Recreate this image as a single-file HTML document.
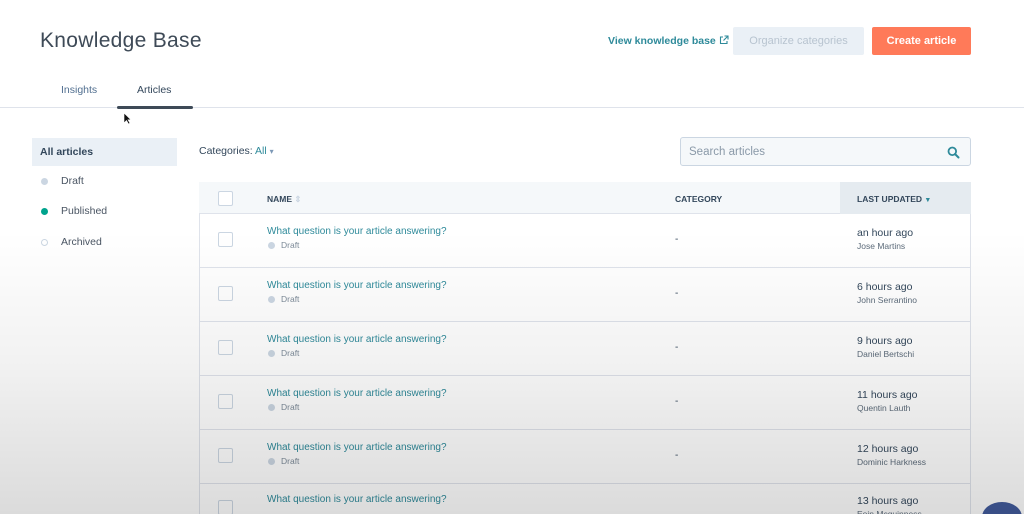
<!DOCTYPE html>
<html style="width:1024px;height:514px;overflow:hidden"><head><style>
*{margin:0;padding:0;box-sizing:border-box}
body{width:1024px;height:514px;overflow:hidden;background:#fff;font-family:"Liberation Sans",sans-serif;color:#33475b;position:relative}
.abs{position:absolute}
.title{left:40px;top:29px;font-size:21px;color:#3e4a57;font-weight:300;letter-spacing:.3px}
.link{left:608px;top:35px;font-size:10.5px;color:#2e8a9a;font-weight:bold}
.btn1{left:733px;top:27px;width:131px;height:28px;background:#eaf0f6;color:#b8c4d0;font-size:11px;text-align:center;line-height:28px;border-radius:2px}
.btn2{left:872px;top:27px;width:99px;height:28px;background:#ff7a59;color:#fff;font-size:11px;font-weight:bold;text-align:center;line-height:28px;border-radius:2px}
.tab{top:84px;font-size:10.5px}
.hr{left:0;top:107px;width:1024px;height:1px;background:#dfe3eb}
.ul{left:117px;top:106px;width:76px;height:3px;background:#3e4a57;border-radius:2px}
.side{left:32px;top:138px;width:145px;height:28px;background:#eaf0f6;font-size:10.5px;font-weight:bold;line-height:28px;padding-left:8px}
.si{left:61px;font-size:10.5px;color:#4a5563}
.dot{left:41px;width:7px;height:7px;border-radius:50%}
.cat{left:199px;top:145px;font-size:10.5px}
.search{left:680px;top:137px;width:291px;height:29px;border:1px solid #cbd6e2;background:#f5f8fa;border-radius:3px;font-size:11.5px;color:#8a99a8;line-height:29px;padding-left:8px}
.table{left:199px;top:182px;width:772px;height:340px;border:1px solid #dfe3eb;border-bottom:none}
.th{left:199px;top:182px;width:772px;height:32px;background:#f5f8fa;border-bottom:1px solid #dfe3eb}
.hcell{font-size:8.5px;font-weight:bold;top:194px;color:#33475b}
.cb{left:218px;width:15px;height:15px;border:1px solid #cbd6e2;border-radius:2px;background:#fff}
.q{left:267px;font-size:10px;color:#2e8a9a}
.dr{left:281px;font-size:8.5px;color:#7c8a98}
.dd{left:268px;width:7px;height:7px;border-radius:50%;background:#cbd6e2}
.t{left:857px;font-size:10.5px;color:#33475b}
.n{left:857px;font-size:8.5px;color:#5c6b7a}
.rl{left:199px;width:772px;height:1px;background:#dfe3eb}
.shade{left:0;top:0;width:1024px;height:514px;background:linear-gradient(to bottom,rgba(0,0,0,0) 0%,rgba(0,0,0,0) 45%,rgba(0,0,0,.05) 70%,rgba(0,0,0,.14) 100%);pointer-events:none}
</style></head><body>
<div class="abs title">Knowledge Base</div>
<div class="abs link">View knowledge base <svg width="10" height="10" viewBox="0 0 10 10" style="vertical-align:-1px"><path d="M4 2H1.5v6.5H8V6M5.5 1H9v3.5M9 1L4.5 5.5" fill="none" stroke="#2e8a9a" stroke-width="1.1"/></svg></div>
<div class="abs btn1">Organize categories</div>
<div class="abs btn2">Create article</div>
<div class="abs tab" style="left:61px;color:#516f90">Insights</div>
<div class="abs tab" style="left:137px;color:#33475b">Articles</div>
<div class="abs hr"></div>
<div class="abs ul"></div>
<svg class="abs" style="left:123px;top:112px" width="9" height="13" viewBox="0 0 9 13"><path d="M1 1v10l2.5-2.5 2 3.5 1.5-.8-2-3.4H8z" fill="#111" stroke="#fff" stroke-width=".6"/></svg>
<div class="abs side">All articles</div>
<div class="abs dot" style="top:178px;background:#cbd6e2"></div><div class="abs si" style="top:175px">Draft</div>
<div class="abs dot" style="top:208px;background:#00a38d"></div><div class="abs si" style="top:205px">Published</div>
<div class="abs dot" style="top:239px;border:1px solid #cbd6e2"></div><div class="abs si" style="top:236px">Archived</div>
<div class="abs cat">Categories: <span style="color:#2e8a9a">All</span> <span style="color:#7c98b6;font-size:8px">▾</span></div>
<div class="abs search">Search articles</div>
<svg class="abs" style="left:947px;top:146px" width="13" height="13" viewBox="0 0 13 13"><circle cx="5.3" cy="5.3" r="3.8" fill="none" stroke="#2e8a9a" stroke-width="1.8"/><path d="M8 8l3.5 3.5" stroke="#2e8a9a" stroke-width="2" stroke-linecap="round"/></svg>
<div class="abs table"></div>
<div class="abs th"></div>
<div class="abs" style="left:840px;top:182px;width:131px;height:32px;background:#e5ebf0"></div>
<div class="abs cb" style="top:191px"></div>
<div class="abs hcell" style="left:267px">NAME <span style="color:#cbd6e2">⇕</span></div>
<div class="abs hcell" style="left:675px">CATEGORY</div>
<div class="abs hcell" style="left:857px">LAST UPDATED <span style="color:#2e8a9a;font-size:7px">▼</span></div>

<div class="abs cb" style="top:232px"></div><div class="abs q" style="top:226px">What question is your article answering?</div><div class="abs dd" style="top:242px"></div><div class="abs dr" style="top:240px">Draft</div><div class="abs" style="left:675px;top:234px;font-size:10px">-</div><div class="abs t" style="top:227px">an hour ago</div><div class="abs n" style="top:241px">Jose Martins</div>
<div class="abs rl" style="top:267px"></div>
<div class="abs cb" style="top:286px"></div><div class="abs q" style="top:280px">What question is your article answering?</div><div class="abs dd" style="top:296px"></div><div class="abs dr" style="top:294px">Draft</div><div class="abs" style="left:675px;top:288px;font-size:10px">-</div><div class="abs t" style="top:281px">6 hours ago</div><div class="abs n" style="top:295px">John Serrantino</div>
<div class="abs rl" style="top:321px"></div>
<div class="abs cb" style="top:340px"></div><div class="abs q" style="top:334px">What question is your article answering?</div><div class="abs dd" style="top:350px"></div><div class="abs dr" style="top:348px">Draft</div><div class="abs" style="left:675px;top:342px;font-size:10px">-</div><div class="abs t" style="top:335px">9 hours ago</div><div class="abs n" style="top:349px">Daniel Bertschi</div>
<div class="abs rl" style="top:375px"></div>
<div class="abs cb" style="top:394px"></div><div class="abs q" style="top:388px">What question is your article answering?</div><div class="abs dd" style="top:404px"></div><div class="abs dr" style="top:402px">Draft</div><div class="abs" style="left:675px;top:396px;font-size:10px">-</div><div class="abs t" style="top:389px">11 hours ago</div><div class="abs n" style="top:403px">Quentin Lauth</div>
<div class="abs rl" style="top:429px"></div>
<div class="abs cb" style="top:448px"></div><div class="abs q" style="top:442px">What question is your article answering?</div><div class="abs dd" style="top:458px"></div><div class="abs dr" style="top:456px">Draft</div><div class="abs" style="left:675px;top:450px;font-size:10px">-</div><div class="abs t" style="top:443px">12 hours ago</div><div class="abs n" style="top:457px">Dominic Harkness</div>
<div class="abs rl" style="top:483px"></div>
<div class="abs cb" style="top:500px"></div><div class="abs q" style="top:494px">What question is your article answering?</div><div class="abs t" style="top:495px">13 hours ago</div><div class="abs n" style="top:509px">Eoin Mcguinness</div>
<div class="abs" style="left:982px;top:502px;width:40px;height:30px;border-radius:50%;background:#425b9c"></div>
<div class="abs shade"></div>
</body></html>
